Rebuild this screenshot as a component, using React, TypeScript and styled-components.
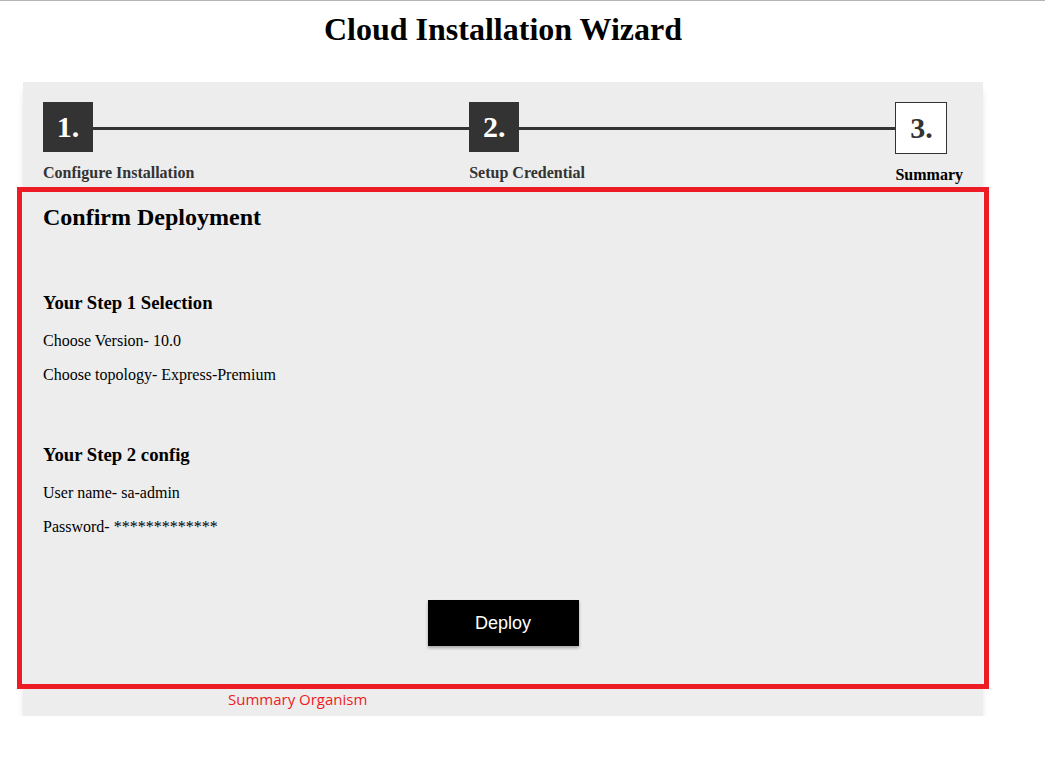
import styled, { createGlobalStyle } from 'styled-components'

const GlobalStyle = createGlobalStyle`
  html, body {
    margin: 0;
    padding: 0;
    background: #fff;
  }

  body {
    border-top: 1px solid #b4b4b4;
    font-family: "Liberation Serif", "Times New Roman", serif;
    color: #000;
  }
`

const Page = styled.div`
  width: 960px;
  margin-left: 23px;
`

const Title = styled.h1`
  margin: 10px 0 35px;
  font-size: 32px;
  line-height: 36px;
  font-weight: bold;
  text-align: center;
`

const Card = styled.div`
  background-color: #ededed;
  padding: 20px 20px 7px;
  box-shadow: 0 6px 8px -3px rgba(0, 0, 0, 0.22);
`

const StepsRow = styled.div`
  display: flex;
  align-items: flex-start;
`

const Step = styled.div<{ $last?: boolean }>`
  display: flex;
  flex-direction: column;
  flex: none;
  width: ${({ $last }) => ($last ? 'auto' : '50px')};
`

const StepBox = styled.div<{ $active?: boolean }>`
  width: 50px;
  height: 50px;
  display: flex;
  align-items: center;
  justify-content: center;
  font-size: 30px;
  font-weight: bold;
  background-color: ${({ $active }) => ($active ? '#333' : '#fff')};
  color: ${({ $active }) => ($active ? '#fff' : '#333')};
  border: ${({ $active }) => ($active ? 'none' : '1px solid #333')};
`

const Connector = styled.div`
  flex: 1;
  height: 3px;
  margin-top: 25px;
  background-color: #333;
`

const StepLabel = styled.div<{ $active?: boolean }>`
  margin-top: 12px;
  font-size: 16px;
  line-height: 18px;
  font-weight: bold;
  white-space: nowrap;
  color: ${({ $active }) => ($active ? '#333' : '#000')};
`

const Summary = styled.section`
  margin: 3px -26px 0;
  border: 5px solid #ed1c24;
  padding: 11px 21px 38px;
`

const Heading = styled.h2`
  margin: 0;
  font-size: 24px;
  line-height: 28px;
  font-weight: bold;
`

const Group = styled.div`
  margin-top: 61px;

  & + & {
    margin-top: 60px;
  }
`

const GroupTitle = styled.h3`
  margin: 0;
  font-size: 18.72px;
  line-height: 22px;
  font-weight: bold;
`

const Line = styled.p`
  margin: 18px 0 0;
  font-size: 16px;
  line-height: 18px;

  & + & {
    margin-top: 16px;
  }
`

const Actions = styled.div`
  display: flex;
  justify-content: center;
  margin-top: 64px;
`

const DeployButton = styled.button`
  width: 151px;
  height: 46px;
  border: none;
  background-color: #000;
  color: #fff;
  font-family: "Liberation Sans", Arial, sans-serif;
  font-size: 18px;
  cursor: pointer;
  box-shadow: 0 2px 3px rgba(0, 0, 0, 0.3);
`

const Annotation = styled.div`
  margin-top: 0;
  padding-left: 185px;
  font-family: "Open Sans", "Noto Sans", sans-serif;
  font-size: 15px;
  line-height: 20px;
  color: #ed1c24;
`

const steps = [
  { num: '1.', label: 'Configure Installation', active: true },
  { num: '2.', label: 'Setup Credential', active: true },
  { num: '3.', label: 'Summary', active: false },
]

export default function App() {
  return (
    <>
      <GlobalStyle />
      <Page>
        <Title>Cloud Installation Wizard</Title>
        <Card>
          <StepsRow>
            {steps.map((s, i) => (
              <>
                {i > 0 && <Connector key={'c' + i} />}
                <Step key={s.num} $last={i === steps.length - 1}>
                  <StepBox $active={s.active}>{s.num}</StepBox>
                  <StepLabel $active={s.active}>{s.label}</StepLabel>
                </Step>
              </>
            ))}
          </StepsRow>

          <Summary>
            <Heading>Confirm Deployment</Heading>
            <Group>
              <GroupTitle>Your Step 1 Selection</GroupTitle>
              <Line>Choose Version- 10.0</Line>
              <Line>Choose topology- Express-Premium</Line>
            </Group>
            <Group>
              <GroupTitle>Your Step 2 config</GroupTitle>
              <Line>User name- sa-admin</Line>
              <Line>Password- *************</Line>
            </Group>
            <Actions>
              <DeployButton>Deploy</DeployButton>
            </Actions>
          </Summary>
          <Annotation>Summary Organism</Annotation>
        </Card>
      </Page>
    </>
  )
}
